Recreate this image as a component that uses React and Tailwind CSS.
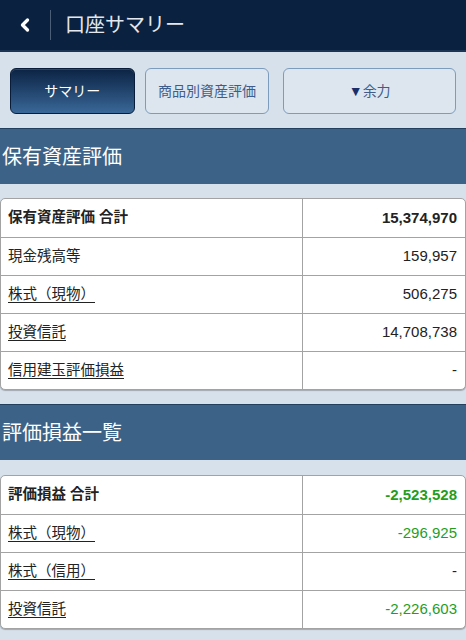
import { ChevronLeft } from 'lucide-react';

const holdings = [
  { label: '保有資産評価 合計', value: '15,374,970', total: true },
  { label: '現金残高等', value: '159,957' },
  { label: '株式（現物）', value: '506,275', link: true },
  { label: '投資信託', value: '14,708,738', link: true },
  { label: '信用建玉評価損益', value: '-', link: true },
];

const profits = [
  { label: '評価損益 合計', value: '-2,523,528', total: true, green: true },
  { label: '株式（現物）', value: '-296,925', link: true, green: true },
  { label: '株式（信用）', value: '-', link: true },
  { label: '投資信託', value: '-2,226,603', link: true, green: true },
];

function SectionHeader({ title }) {
  return (
    <div className="h-[56px] bg-[#3d6288] border-t border-[#23415f] flex items-center pl-[2px] text-[20px] text-white">
      {title}
    </div>
  );
}

function Table({ rows }) {
  return (
    <div className="bg-white border border-[#a3a3a3] rounded-[5px] shadow-[0_1px_1px_rgba(0,0,0,0.25)] overflow-hidden">
      {rows.map((r, i) => (
        <div
          key={i}
          className={`grid grid-cols-[302px_1fr] h-[38px] ${i > 0 ? 'border-t border-[#a3a3a3]' : ''}`}
        >
          <div className="flex items-center pl-[7px] border-r border-[#a3a3a3]">
            <span
              className={`text-[14.5px] text-[#222] ${r.total ? 'font-bold' : ''} ${r.link ? 'underline underline-offset-[3px]' : ''}`}
            >
              {r.label}
            </span>
          </div>
          <div
            className={`flex items-center justify-end pr-[8px] text-[15px] ${r.total ? 'font-bold' : ''} ${r.green ? 'text-[#1f9e1f]' : 'text-[#222]'}`}
          >
            {r.value}
          </div>
        </div>
      ))}
    </div>
  );
}

export default function App() {
  return (
    <div
      className="w-[466px] h-[640px] overflow-hidden bg-[#d7e1eb]"
      style={{ fontFamily: '"Liberation Sans", "Noto Sans CJK JP", sans-serif' }}
    >
      {/* Header */}
      <div className="h-[52px] bg-[#0b2140] border-b-2 border-[#1d3555] flex items-center">
        <div className="w-[50px] flex items-center justify-center text-white">
          <ChevronLeft size={20} strokeWidth={4} />
        </div>
        <div className="w-px h-[30px] bg-[#4a5e78]" />
        <div className="pl-[14px] text-[20px] text-[#e4e8ee]">口座サマリー</div>
      </div>

      {/* Tabs */}
      <div className="h-[76px] flex items-center gap-[10px] px-[10px] pt-[2px]">
        <button className="w-[125px] h-[46px] rounded-[6px] border border-[#0a1d38] bg-gradient-to-b from-[#0c2445] to-[#3a6898] text-white text-[14px] shadow-[inset_0_1px_0_rgba(255,255,255,0.15)]">
          サマリー
        </button>
        <button className="w-[125px] h-[46px] rounded-[6px] border border-[#7d9cbd] bg-[#dde6ef] text-[#3e5d8c] text-[14px]">
          商品別資産評価
        </button>
        <button className="ml-[4px] w-[173px] h-[46px] rounded-[6px] border border-[#7d9cbd] bg-[#dde6ef] text-[#3e5d8c] text-[14px]">
          <span className="text-[#1a2f6a]">▼</span>余力
        </button>
      </div>

      <SectionHeader title="保有資産評価" />
      <div className="pt-[14px] pb-[14px]">
        <Table rows={holdings} />
      </div>

      <SectionHeader title="評価損益一覧" />
      <div className="pt-[15px] pb-[14px]">
        <Table rows={profits} />
      </div>
    </div>
  );
}
